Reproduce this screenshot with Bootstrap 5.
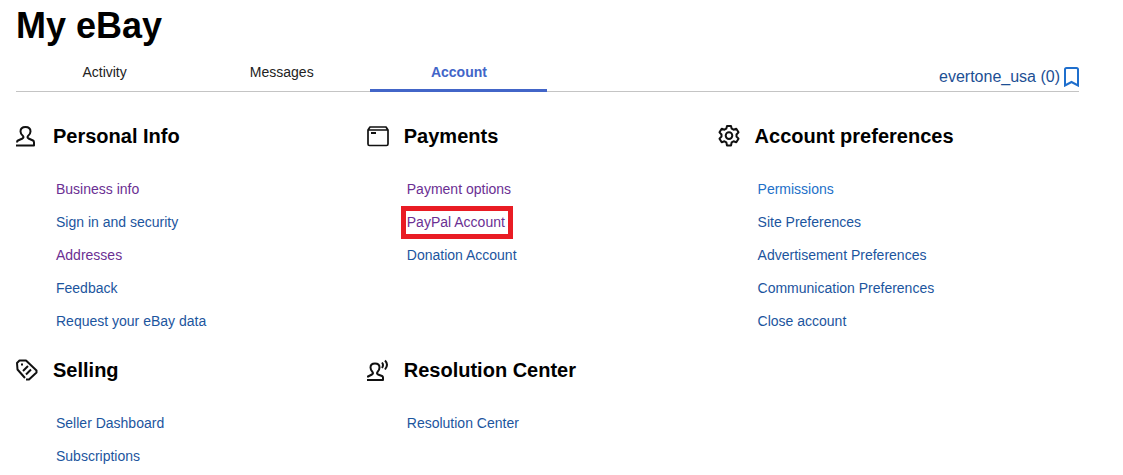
<!DOCTYPE html>
<html lang="en">
<head>
<meta charset="utf-8">
<meta name="viewport" content="width=device-width, initial-scale=1">
<title>My eBay</title>
<link href="https://cdn.jsdelivr.net/npm/bootstrap@5.3.0/dist/css/bootstrap.min.css" rel="stylesheet">
<style>
  body { font-family: "Liberation Sans", Arial, sans-serif; font-size: 14px; line-height: 21px; color: #222; background: #fff; }
  .page { padding: 5px 44px 0 16px; }
  h1 { font-size: 36px; line-height: 42px; font-weight: 700; color: #000; }
  .tabs-bar { border-bottom: 1px solid #c4c4c4; height: 45px; margin-bottom: 26px; }
  .tabs-bar .nav { margin-bottom: -1px; }
  .tabs-bar .nav-link { color: #222; padding: 15px 0 0; height: 45px; border-bottom: 3px solid transparent; }
  .tabs-bar .nav-link.active { color: #4265c8; font-weight: 700; border-bottom-color: #4265c8; }
  .user-link { color: #1c4f94; font-size: 16px; line-height: 20px; margin-bottom: 5px; }
  .section { width: 33%; padding-bottom: 14px; }
  .section-head { height: 36px; margin-bottom: 19px; gap: 15px; }
  .section-head svg { width: 22px; height: 24px; fill: none; stroke: #111; stroke-width: 2; stroke-linejoin: round; }
  h2 { font-size: 20px; line-height: 24px; font-weight: 700; color: #000; }
  .links { padding-left: 40px; }
  .links li { height: 33px; padding-top: 6px; }
  .links a { color: #1c559e; text-decoration: none; }
  .links a.seen { color: #6b2f93; }
  .links a.hot { color: #2270c8; }
  .links a.marked { outline: 5px solid #e91c24; outline-offset: 1px; display: inline-block; padding-right: 2px; }
</style>
</head>
<body>
<main class="page">
  <h1 class="mb-0">My eBay</h1>
  <div class="tabs-bar d-flex align-items-end">
    <nav class="nav flex-grow-1" aria-label="My eBay">
      <a class="nav-link col-2 text-center" href="#">Activity</a>
      <a class="nav-link col-2 text-center" href="#">Messages</a>
      <a class="nav-link col-2 text-center active" aria-current="page" href="#">Account</a>
      <a class="user-link ms-auto align-self-end d-flex align-items-center text-decoration-none" href="#">evertone_usa (0)
        <svg class="ms-1" width="15" height="20" viewBox="0 0 15 20" fill="none" stroke="#1f6fcd" stroke-width="2" aria-hidden="true"><path d="M1 18.500V2.500Q1 1 2.500 1H12.500Q14 1 14 2.500V18.500L7.500 15Z"/></svg>
      </a>
    </nav>
  </div>

  <div class="d-flex flex-wrap">
    <section class="section">
      <div class="section-head d-flex align-items-center">
        <svg viewBox="0 0 22 24" aria-hidden="true"><path d="M0 21.500H18V18.500Q18 17 17 16.500L12.500 14.500Q11 13.500 12 12Q14.500 10 14.500 7.500Q14.500 3 9.500 3Q4.500 3 4.500 7.500Q4.500 10 7 12Q8 13.500 6.500 14.500L2 16.500Q1 17 1 18.500"/></svg>
        <h2 class="mb-0">Personal Info</h2>
      </div>
      <ul class="links list-unstyled mb-0">
        <li><a class="seen" href="#">Business info</a></li>
        <li><a href="#">Sign in and security</a></li>
        <li><a class="seen" href="#">Addresses</a></li>
        <li><a href="#">Feedback</a></li>
        <li><a href="#">Request your eBay data</a></li>
      </ul>
    </section>

    <section class="section">
      <div class="section-head d-flex align-items-center">
        <svg viewBox="0 0 22 24" aria-hidden="true"><path d="M1 6L3 3H19L21 6V20Q21 21.500 19.500 21.500H2.500Q1 21.500 1 20ZM1 6H21" stroke-width="1.700"/><path d="M4 9H9"/></svg>
        <h2 class="mb-0">Payments</h2>
      </div>
      <ul class="links list-unstyled mb-0">
        <li><a class="seen" href="#">Payment options</a></li>
        <li><a class="seen marked" href="#">PayPal Account</a></li>
        <li><a href="#">Donation Account</a></li>
      </ul>
    </section>

    <section class="section">
      <div class="section-head d-flex align-items-center">
        <svg viewBox="0 0 22 24" aria-hidden="true"><path d="M9 2H13L13.700 4.700L15.500 5.700L18.300 4.700L20.500 8.300L18.500 10.500V12.500L20.500 14.700L18.300 18.300L15.500 17.300L13.700 18.300L13 21.500H9L8.300 18.300L6.500 17.300L3.700 18.300L1.500 14.700L3.500 12.500V10.500L1.500 8.300L3.700 4.700L6.500 5.700L8.300 4.700Z"/><circle cx="11" cy="11.600" r="3.300"/></svg>
        <h2 class="mb-0">Account preferences</h2>
      </div>
      <ul class="links list-unstyled mb-0">
        <li><a class="hot" href="#">Permissions</a></li>
        <li><a href="#">Site Preferences</a></li>
        <li><a href="#">Advertisement Preferences</a></li>
        <li><a href="#">Communication Preferences</a></li>
        <li><a href="#">Close account</a></li>
      </ul>
    </section>

    <section class="section pb-0">
      <div class="section-head d-flex align-items-center">
        <svg viewBox="0 0 22 24" aria-hidden="true"><path d="M9 20L1.500 11.500L1 5L3.500 2.500H10L20.500 12.500V14.500L13 21.500H10"/><path d="M7 13L12 8M10 16.500L15 11.500M5 6.500H7"/></svg>
        <h2 class="mb-0">Selling</h2>
      </div>
      <ul class="links list-unstyled mb-0">
        <li><a href="#">Seller Dashboard</a></li>
        <li class="h-auto"><a href="#">Subscriptions</a></li>
      </ul>
    </section>

    <section class="section pb-0">
      <div class="section-head d-flex align-items-center">
        <svg viewBox="0 0 22 24" aria-hidden="true"><path d="M1 19.500V18.500L5 16.500Q6.500 15.500 5.500 14Q3.500 12 3.500 9.500Q3.500 5.500 8 5.500Q12.500 5.500 12.500 9.500Q12.500 12 10.500 14Q9.500 15.500 11 16.500L15 18Q16 18.500 16 19.500V22H0"/><path d="M15 4.500Q17 7 15 10M18 2.500Q22 6.500 18 11.500"/></svg>
        <h2 class="mb-0">Resolution Center</h2>
      </div>
      <ul class="links list-unstyled mb-0">
        <li><a href="#">Resolution Center</a></li>
      </ul>
    </section>
  </div>
</main>
<script src="https://cdn.jsdelivr.net/npm/bootstrap@5.3.0/dist/js/bootstrap.bundle.min.js"></script>
</body>
</html>
